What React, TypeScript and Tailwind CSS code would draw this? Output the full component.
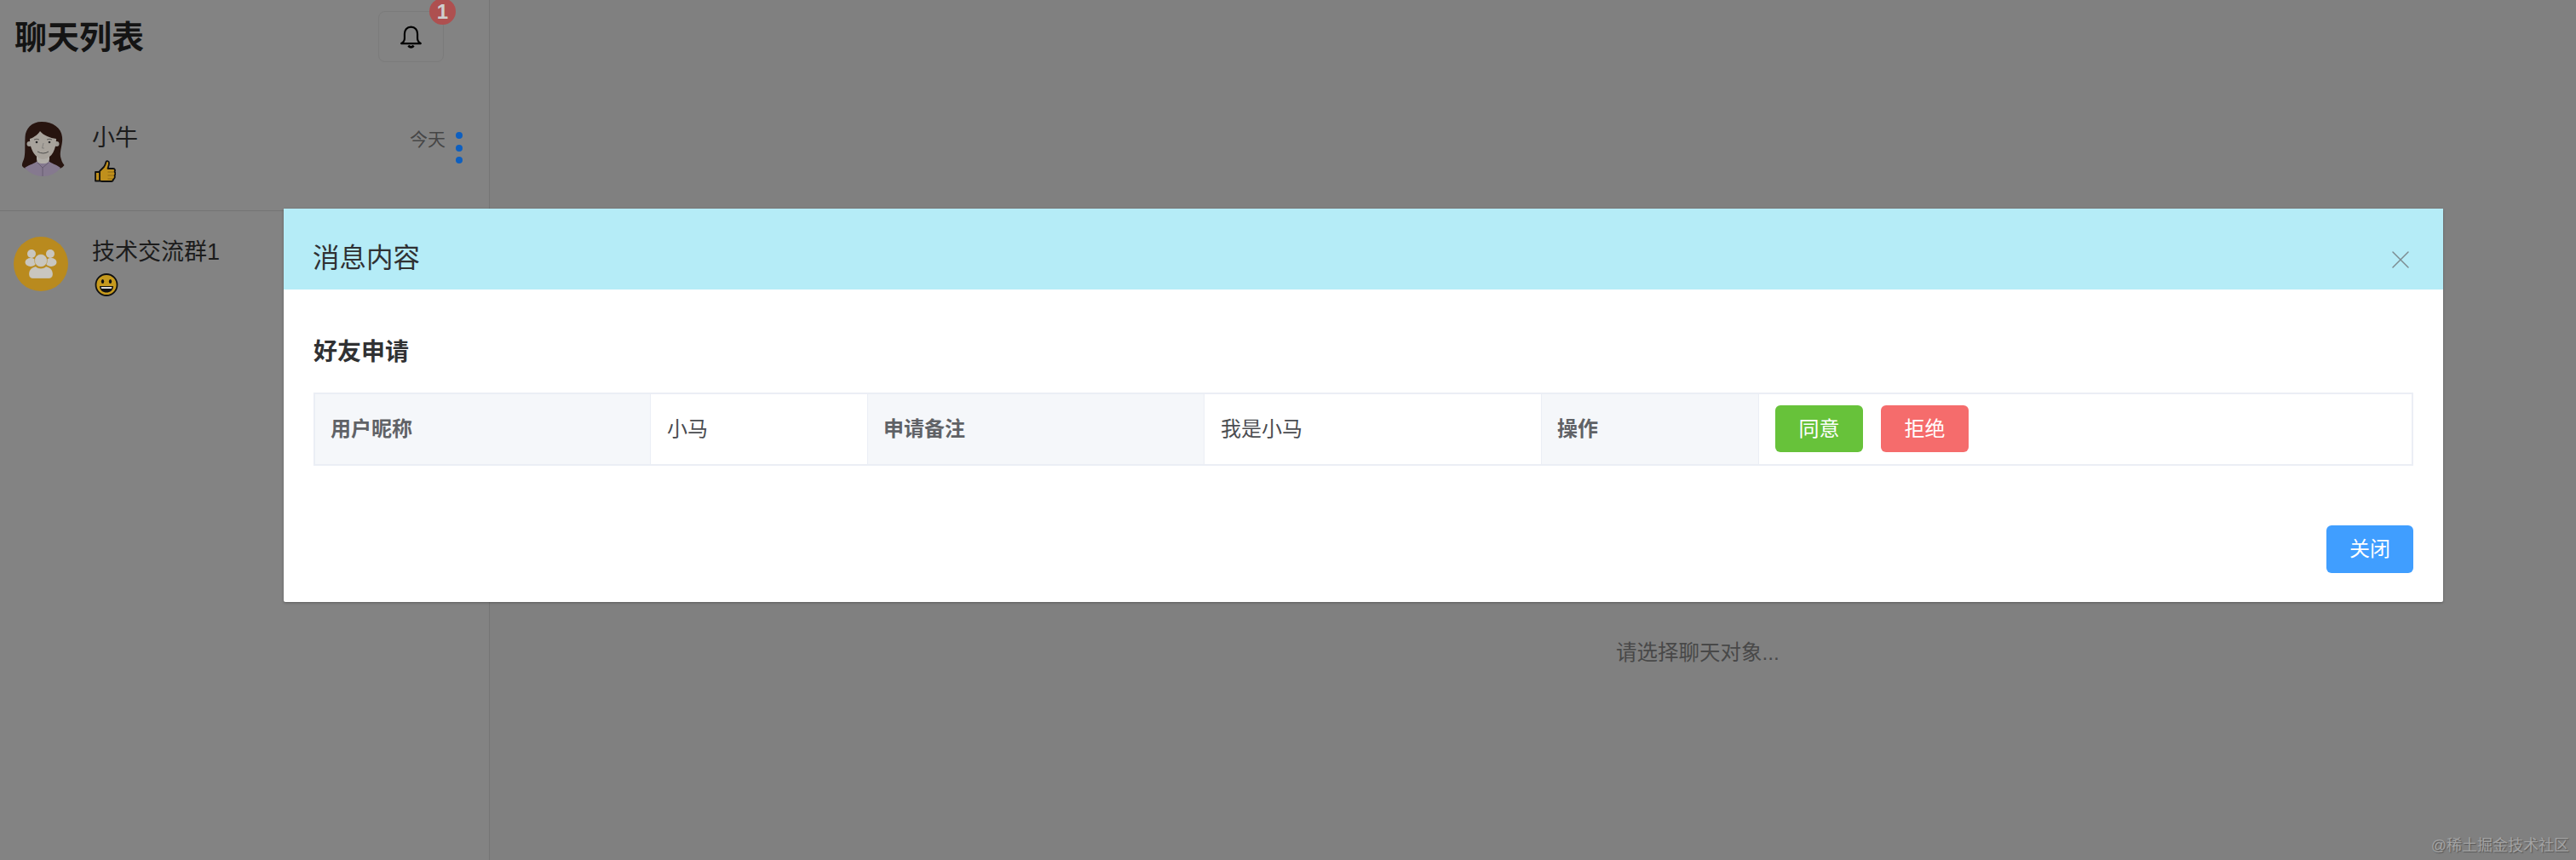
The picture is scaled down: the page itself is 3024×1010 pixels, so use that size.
import { X } from 'lucide-react';

function WomanAvatar() {
  return (
    <svg viewBox="0 0 64 64" className="w-16 h-16 shrink-0">
      <path d="M33 0 C21 0 14 8 13.5 18 C13 30 14 38 12 44 C11 47 9.5 49 10 52 C14 57 20 56 24 54 L44 54 C49 56 55 57 59.5 51 C57 48 56 45 55 41 C54 33 58 26 57 18 C56 7 46 0 33 0 Z" fill="#27140f" />
      <path d="M13 54 C19 50 25 49 28 46 L41 46 C44 49 50 50 55 54 C50 61 42 64 34 64 C26 64 18 60 13 54 Z" fill="#85798f" />
      <rect x="27" y="36" width="15" height="13" rx="5" fill="#b2aea8" />
      <circle cx="18.5" cy="26" r="3" fill="#a09c96" />
      <circle cx="50.5" cy="26" r="3" fill="#a09c96" />
      <path d="M19 20 C25 18 29 14 31 11 C35 16 43 19 50 20 C50 32 45 43 35 44 C25 43 19 32 19 20 Z" fill="#a8a39c" />
      <path d="M24 21 Q27 19.5 30 21 M39 21 Q42 19.5 45 21" fill="none" stroke="#3a3a3a" strokeWidth="0.7" />
      <circle cx="27" cy="24" r="1.3" fill="#2a2a2a" />
      <circle cx="42" cy="24" r="1.3" fill="#2a2a2a" />
      <path d="M28 35 Q35 39 41 35" fill="none" stroke="#3a3a3a" strokeWidth="0.8" />
      <path d="M35 25 L33.5 31 L36 31" fill="none" stroke="#6a6a6a" strokeWidth="0.6" />
      <path d="M28 48 L34 54 L41 48 M34 54 V64" fill="none" stroke="#5f5669" strokeWidth="0.8" />
    </svg>
  );
}

function GroupAvatar() {
  return (
    <svg viewBox="0 0 64 64" className="w-16 h-16 shrink-0">
      <circle cx="32" cy="32" r="32" fill="#b98a1e" />
      <g fill="#c9c6bf">
        <circle cx="21" cy="20" r="5" />
        <circle cx="43" cy="20" r="5" />
        <ellipse cx="20" cy="30" rx="6.5" ry="5" />
        <ellipse cx="44" cy="30" rx="6.5" ry="5" />
        <circle cx="32" cy="28" r="7.5" stroke="#b98a1e" strokeWidth="0.5" />
        <path d="M26 35 C29 38 35 38 38 35 C43 36 46 39 46 44 C46 47 44 49 41 49 H23 C20 49 18 47 18 44 C18 39 21 36 26 35 Z" stroke="#b98a1e" strokeWidth="0.3" />
      </g>
    </svg>
  );
}

function ThumbIcon() {
  return (
    <svg viewBox="0 0 25 26" className="w-[25px] h-[26px] block">
      <path d="M1 14 H6 V24.5 H1 Z M6 13 L11 8 C12.5 6 13 4 13.5 2 C14.5 0.5 17 1 17 3.5 C17 6 16 8 15.5 10 H22 C24 10 24.5 12 23.5 13.5 C24.5 15 24.5 17 23.5 18 C24.3 20 23.5 22 22 22.5 C22 24 21 25 19.5 25 H9 C7.5 25 6 24.5 6 24 Z" fill="#c0901c" stroke="#111" strokeWidth="1.8" strokeLinejoin="round" />
      <path d="M15.5 14 H23 M15.5 18 H23 M15.5 22 H21" stroke="#8a6714" strokeWidth="0.9" />
    </svg>
  );
}

function SmileIcon() {
  return (
    <svg viewBox="0 0 28 27" className="w-7 h-[27px] block">
      <circle cx="14" cy="13.5" r="12.5" fill="#c69a1e" stroke="#111" strokeWidth="1.8" />
      <ellipse cx="9.5" cy="9.5" rx="1.7" ry="2.6" fill="#111" />
      <ellipse cx="18.5" cy="9.5" rx="1.7" ry="2.6" fill="#111" />
      <path d="M6 15 H22 C22 20 18 22.5 14 22.5 C10 22.5 6 20 6 15 Z" fill="#111" />
      <path d="M7.5 16 H20.5 L19.8 18 H8.2 Z" fill="#d8d8d8" />
    </svg>
  );
}

function BellIcon() {
  return (
    <svg viewBox="0 0 23 25" className="w-[25px] h-[27px]" fill="none" stroke="#000" strokeWidth="2">
      <path d="M11.5 1.5 C7 1.5 4.5 5 4.5 9 V14 C4.5 16.5 3 18.5 1 19.5 H22 C20 18.5 18.5 16.5 18.5 14 V9 C18.5 5 16 1.5 11.5 1.5 Z" strokeLinejoin="round" />
      <path d="M8.5 22 Q11.5 25 14.5 22" strokeWidth="2.4" />
    </svg>
  );
}

function LabelCell({ children }: { children: string }) {
  return (
    <div className="flex items-center px-[18px] bg-[#f5f7fa] border-r border-[#ebeef5] text-[24px] font-bold text-[#606266]">
      {children}
    </div>
  );
}

function ValueCell({ children }: { children: string }) {
  return (
    <div className="flex items-center px-[19px] border-r border-[#ebeef5] text-[24px] text-[#4a4c50]">
      {children}
    </div>
  );
}

export default function App() {
  return (
    <div className="relative flex w-[3024px] h-[1010px] overflow-hidden bg-[#808080] font-['Liberation_Sans','Noto_Sans_CJK_SC',sans-serif]">
      <aside className="w-[575px] h-full shrink-0 bg-[#838383] border-r border-[#757575]">
        <div className="h-[110px] flex items-start justify-between pl-[17px] pr-[53px] pt-[14px]">
          <h1 className="text-[38px] leading-[60px] font-bold text-[#141414]">聊天列表</h1>
          <div className="relative w-[77px] h-[60px] -mt-px flex items-center justify-center rounded-lg border border-[#7b7b7b]">
            <BellIcon />
            <span className="absolute -top-[16px] -right-[15px] w-[31px] h-[31px] rounded-full bg-[#ae5050] flex items-center justify-center text-[24px] font-semibold text-[#cfcfcf]">
              1
            </span>
          </div>
        </div>

        <div className="h-[138px] flex items-start pl-4 pr-[31px] pt-[33px] border-b border-[#747474]">
          <WomanAvatar />
          <div className="ml-[28px] mt-px">
            <div className="text-[27px] leading-9 text-[#1c1c1c]">小牛</div>
            <div className="mt-[8px] ml-[3px]">
              <ThumbIcon />
            </div>
          </div>
          <div className="ml-auto mt-[6px] text-[21px] leading-[30px] text-[#464646]">今天</div>
          <div className="ml-3 mt-[12px] flex flex-col gap-[6.5px]">
            <span className="w-2 h-2 rounded-full bg-[#0d5fc0]"></span>
            <span className="w-2 h-2 rounded-full bg-[#0d5fc0]"></span>
            <span className="w-2 h-2 rounded-full bg-[#0d5fc0]"></span>
          </div>
        </div>

        <div className="flex items-start pl-4 pt-[30px]">
          <GroupAvatar />
          <div className="ml-[28px]">
            <div className="text-[27px] leading-9 text-[#1c1c1c]">技术交流群1</div>
            <div className="mt-[7px] ml-[3px]">
              <SmileIcon />
            </div>
          </div>
        </div>
      </aside>

      <main className="flex-1 pl-[1322px] pt-[749px]">
        <p className="text-[24.5px] leading-9 whitespace-nowrap text-[#484848]">请选择聊天对象...</p>
      </main>

      <div className="absolute left-[333px] top-[245px] w-[2535px] bg-white shadow-[0_1px_3px_rgba(0,0,0,0.3)] rounded-[2px]">
        <div className="h-[95px] bg-[#b5ecf7] flex items-center justify-between pl-[34px] pr-[32px] pt-5">
          <h2 className="text-[31.5px] leading-10 text-[#303133]">消息内容</h2>
          <X size={36} strokeWidth={1} className="text-[#7d8c91] mt-[4px]" />
        </div>

        <div className="px-[35px] pt-[54px] pb-[34px]">
          <h3 className="text-[28px] leading-10 font-bold text-[#303133]">好友申请</h3>

          <div className="mt-[27px] h-[86px] border-2 border-[#ebeef5] grid grid-cols-[394px_255px_395px_396px_255px_1fr]">
            <LabelCell>用户昵称</LabelCell>
            <ValueCell>小马</ValueCell>
            <LabelCell>申请备注</LabelCell>
            <ValueCell>我是小马</ValueCell>
            <LabelCell>操作</LabelCell>
            <div className="flex items-center gap-[21px] px-[19px] pb-px">
              <button className="w-[103px] h-[55px] rounded-md bg-[#67c23a] text-white text-[24px]">同意</button>
              <button className="w-[103px] h-[55px] rounded-md bg-[#f56c6c] text-white text-[24px]">拒绝</button>
            </div>
          </div>

          <div className="mt-[70px] flex justify-end">
            <button className="w-[102px] h-[56px] rounded-md bg-[#409eff] text-white text-[24px]">关闭</button>
          </div>
        </div>
      </div>

      <span className="absolute right-2 bottom-[6px] text-[18px] leading-[22px] text-[#a3a3a3] [text-shadow:1px_1px_1px_#555]">
        @稀土掘金技术社区
      </span>
    </div>
  );
}
